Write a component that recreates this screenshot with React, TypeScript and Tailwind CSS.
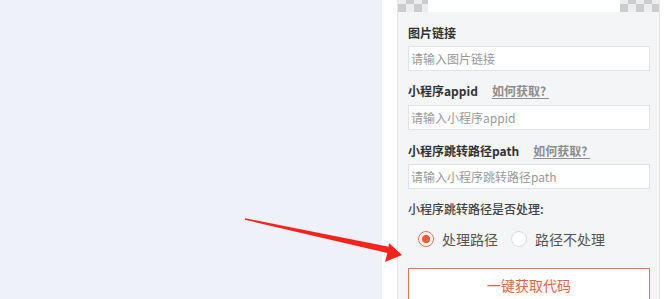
// Mini-program link settings panel with a red pointer arrow.

const FONT = { fontFamily: '"Microsoft YaHei", "Noto Sans CJK SC", "Noto Sans", sans-serif' };

function Checker({ className }: { className: string }) {
  return (
    <div
      className={`h-full bg-[repeating-conic-gradient(#cdcdcd_0%_25%,#ededed_0%_50%)] bg-[length:16px_16px] bg-[position:0_-4px] ${className}`}
    />
  );
}

function Label({ text, link }: { text: string; link?: boolean }) {
  return (
    <div className="flex h-[18px] items-center text-[12px] font-bold leading-[18px] text-[#333]">
      <span>{text}</span>
      {link && (
        <span className="ml-[14px] font-semibold text-[#8d8d8d] underline underline-offset-2">如何获取?&nbsp;</span>
      )}
    </div>
  );
}

function Field({ placeholder }: { placeholder: string }) {
  return (
    <div className="flex h-[25px] items-center border border-[#e2e3e6] bg-white px-[2px] text-[12px] text-[#999]">
      {placeholder}
    </div>
  );
}

function Radio({ checked, label }: { checked?: boolean; label: string }) {
  return (
    <div className="flex items-center gap-[8px]">
      <span
        className={`flex h-[16px] w-[16px] items-center justify-center rounded-full border bg-white ${
          checked ? 'border-[#f3704f]' : 'border-[#dcdcdc]'
        }`}
      >
        {checked && <span className="h-[8px] w-[8px] rounded-full bg-[#f3583a]" />}
      </span>
      <span className="text-[14px] text-[#555]">{label}</span>
    </div>
  );
}

function Arrow() {
  return (
    <svg className="pointer-events-none absolute left-0 top-0" width="666" height="299" viewBox="0 0 666 299">
      <polygon
        points="245,218.2 388.6,246.8 389,243 402,255 385,262 387.4,253 245,219.8"
        fill="#f5231b"
      />
    </svg>
  );
}

export default function App() {
  return (
    <div className="relative flex h-[299px] w-[666px] overflow-hidden bg-white" style={FONT}>
      {/* Left canvas */}
      <div className="w-[382px] bg-[#eef1f8]" />
      <div className="w-[15px] bg-white" />

      {/* Settings panel */}
      <div className="flex w-[263px] flex-col border-x border-[#e4e6ea] bg-[#f4f5f7]">
        <div className="flex h-[12px] shrink-0 bg-white">
          <Checker className="w-[30px]" />
          <div className="flex-1" />
          <Checker className="w-[39px]" />
        </div>

        <div className="flex flex-col pl-[10px] pr-[9px] pt-[12px]">
          <Label text="图片链接" />
          <div className="mt-[4px]">
            <Field placeholder="请输入图片链接" />
          </div>

          <div className="mt-[11px]">
            <Label text="小程序appid" link />
          </div>
          <div className="mt-[5px]">
            <Field placeholder="请输入小程序appid" />
          </div>

          <div className="mt-[12px]">
            <Label text="小程序跳转路径path" link />
          </div>
          <div className="mt-[4px]">
            <Field placeholder="请输入小程序跳转路径path" />
          </div>

          <div className="mt-[11px] flex h-[18px] items-center text-[12px] font-medium text-[#444]">
            小程序跳转路径是否处理:
          </div>

          <div className="mt-[13px] flex h-[16px] items-center gap-[13px] pl-[10px]">
            <Radio checked label="处理路径" />
            <Radio label="路径不处理" />
          </div>

          <div className="mt-[21px] flex shrink-0 flex-col items-center border border-[#f3704f] bg-white pt-[7px]">
            <div className="text-[14px] leading-[18px] text-[#f3603e]">一键获取代码</div>
            <div className="mt-[3px] self-start pl-[2px] text-[12px] leading-[16px] text-[#d4d4d4]">默认获取小程序码链接代码</div>
          </div>
        </div>
      </div>

      <div className="flex-1 bg-white" />

      <Arrow />
    </div>
  );
}
